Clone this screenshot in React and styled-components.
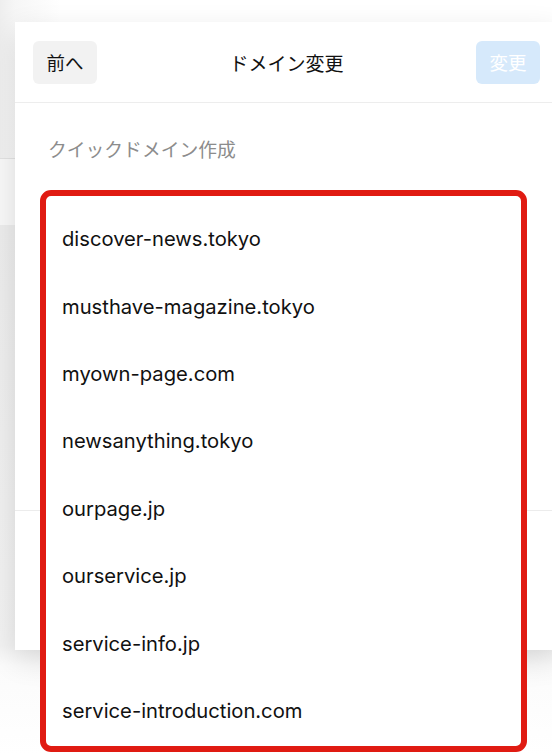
import styled, { createGlobalStyle } from "styled-components";

const GlobalStyle = createGlobalStyle`
  html, body {
    margin: 0;
    padding: 0;
    background: #f3f3f3;
  }
  body {
    font-family: Inter, "Noto Sans CJK JP", sans-serif;
    color: #111;
  }
`;

const domains = [
  "discover-news.tokyo",
  "musthave-magazine.tokyo",
  "myown-page.com",
  "newsanything.tokyo",
  "ourpage.jp",
  "ourservice.jp",
  "service-info.jp",
  "service-introduction.com",
];

function App() {
  return (
    <>
      <GlobalStyle />
      <Screen>
        <Backdrop>
          <BackTop />
          <BackRow />
          <BackRest />
        </Backdrop>
        <Sheet>
          <Header>
            <GhostButton>前へ</GhostButton>
            <Title>ドメイン変更</Title>
            <PrimaryButton disabled>変更</PrimaryButton>
          </Header>
          <Body>
            <Label>クイックドメイン作成</Label>
            <Spacer />
            <Divider />
          </Body>
        </Sheet>
        <Dropdown>
          {domains.map((d) => (
            <Option key={d}>{d}</Option>
          ))}
        </Dropdown>
      </Screen>
    </>
  );
}

export default App;

const Screen = styled.div`
  position: relative;
  width: 552px;
  height: 754px;
  overflow: hidden;
  background: #ffffff;
`;

const Backdrop = styled.div`
  position: absolute;
  inset: 0;
  display: flex;
  flex-direction: column;
`;

const BackTop = styled.div`
  height: 158px;
  background: linear-gradient(90deg, #eeeeee 0px, #f6f6f6 15px, #ffffff 60px);
  border-bottom: 1px solid #e2e2e2;
`;

const BackRow = styled.div`
  height: 66px;
  background: #f8f8f8;
`;

const BackRest = styled.div`
  flex: 1;
  background: linear-gradient(180deg, #ececec 0px, #f2f2f2 420px, #fbfbfb 440px, #ffffff 530px);
`;

const Sheet = styled.div`
  position: relative;
  margin: 22px 0 0 15px;
  width: 543px;
  height: 628px;
  background: #ffffff;
  box-shadow: 0 10px 28px rgba(0, 0, 0, 0.12);
  display: flex;
  flex-direction: column;
`;

const Header = styled.div`
  height: 81px;
  box-sizing: border-box;
  padding: 0 18px;
  display: flex;
  align-items: center;
  justify-content: space-between;
  border-bottom: 1px solid #ededed;
`;

const BaseButton = styled.button`
  width: 64px;
  height: 43px;
  border: none;
  border-radius: 6px;
  font-family: inherit;
  font-size: 18.5px;
  padding: 0;
`;

const GhostButton = styled(BaseButton)`
  background: #f2f2f2;
  color: #111;
`;

const PrimaryButton = styled(BaseButton)`
  background: #d6e9fb;
  color: #ffffff;
`;

const Title = styled.div`
  font-size: 19px;
  color: #111;
`;

const Body = styled.div`
  flex: 1;
  display: flex;
  flex-direction: column;
  padding: 35px 0 0 33px;
`;

const Label = styled.div`
  font-size: 18.8px;
  color: #8c8c8c;
  line-height: 26px;
`;

const Spacer = styled.div`
  height: 346px;
`;

const Divider = styled.div`
  height: 1px;
  margin-left: -33px;
  background: #ececec;
`;

const Dropdown = styled.ul`
  position: absolute;
  left: 40px;
  top: 190px;
  width: 487px;
  height: 562px;
  box-sizing: border-box;
  margin: 0;
  padding: 9px 0 0;
  list-style: none;
  background: #ffffff;
  border: 6px solid #e01b12;
  border-radius: 11px;
`;

const Option = styled.li`
  height: 67.4px;
  display: flex;
  align-items: center;
  padding-left: 16px;
  font-size: 20.2px;
  color: #111;
`;
